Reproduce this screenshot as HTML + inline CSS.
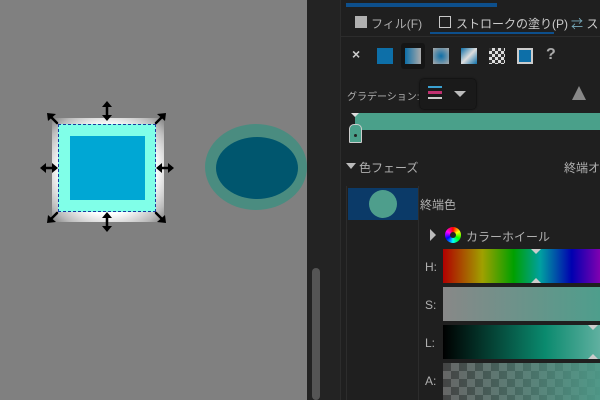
<!DOCTYPE html>
<html><head><meta charset="utf-8"><style>
body{margin:0;width:600px;height:400px;overflow:hidden;background:#1f1f1f;font-family:"Liberation Sans","Noto Sans CJK JP",sans-serif;position:relative}
.a{position:absolute}
.t{position:absolute;color:#b0b0b0;font-size:12px;white-space:nowrap}
</style></head><body>
<div class="a" style="left:0;top:0;width:307px;height:400px;background:#808080"></div>
<div class="a" style="left:307px;top:0;width:33px;height:400px;background:#232323"></div>
<div class="a" style="left:312px;top:268px;width:8px;height:132px;background:#555;border-radius:4px"></div>
<div class="a" style="left:340px;top:0;width:1px;height:400px;background:#2c2c2c"></div>
<div class="a" style="left:346px;top:3px;width:151px;height:4px;background:#0d4f8c"></div>
<div class="a" style="left:341px;top:36px;width:259px;height:1px;background:#2c2c2c"></div>
<!-- tabs -->
<div class="a" style="left:355px;top:16px;width:12px;height:12px;background:#b0b0b0"></div>
<div class="t" style="left:371px;top:15px">フィル(F)</div>
<div class="a" style="left:439px;top:16px;width:10px;height:10px;border:1px solid #c8c8c8"></div>
<div class="t" style="left:456px;top:15px;color:#ccc">ストロークの塗り(P)</div>
<div class="a" style="left:430px;top:32px;width:124px;height:2px;background:#0d4f8c"></div>
<div class="t" style="left:571px;top:15px;color:#7ab">⇄ <span style="color:#ccc">ス</span></div>
<!-- paint type icons -->
<div class="t" style="left:352px;top:46px;font-size:14px;color:#ccc;font-weight:bold">×</div>
<div class="a" style="left:377px;top:48px;width:16px;height:16px;background:#0d6fa8"></div>
<div class="a" style="left:401px;top:43px;width:24px;height:26px;background:#151515;border-radius:3px"></div>
<div class="a" style="left:405px;top:48px;width:16px;height:16px;background:linear-gradient(90deg,#0d6fa8,#aaa)"></div>
<div class="a" style="left:433px;top:48px;width:16px;height:16px;background:radial-gradient(#0d6fa8,#aaa)"></div>
<div class="a" style="left:461px;top:48px;width:16px;height:16px;background:linear-gradient(135deg,#0d6fa8,#ddd,#0d6fa8)"></div>
<div class="a" style="left:489px;top:48px;width:16px;height:16px;background:repeating-conic-gradient(#ddd 0 25%,#333 0 50%) 0 0/6px 6px"></div>
<div class="a" style="left:517px;top:48px;width:12px;height:12px;border:2px solid #ccc;background:#0d6fa8"></div>
<div class="t" style="left:546px;top:46px;font-size:16px;font-weight:bold;color:#aaa">?</div>
<!-- gradient row -->
<div class="t" style="left:347px;top:88px;font-size:10px">グラデーション:</div>
<div class="a" style="left:420px;top:79px;width:56px;height:30px;background:#1a1a1a;border-radius:4px;box-shadow:0 0 2px #000"></div>
<div class="a" style="left:428px;top:86px;width:14px;height:2px;background:#3aa0d0"></div>
<div class="a" style="left:428px;top:91px;width:14px;height:3px;background:#c03070"></div>
<div class="a" style="left:428px;top:97px;width:14px;height:2px;background:#ccc"></div>
<div class="a" style="left:454px;top:91px;border-left:6px solid transparent;border-right:6px solid transparent;border-top:6px solid #bbb"></div>
<div class="a" style="left:572px;top:86px;border-left:7px solid transparent;border-right:7px solid transparent;border-bottom:14px solid #888"></div>
<!-- gradient bar -->
<div class="a" style="left:355px;top:113px;width:245px;height:17px;background:#4aa08a"></div>
<div class="a" style="left:351px;top:113px;border-left:4px solid transparent;border-right:4px solid transparent;border-top:4px solid #ddd"></div>
<div class="a" style="left:349px;top:124px;width:13px;height:19px;background:#4aa08a;border:1px solid #ccc;border-radius:5px 5px 1px 1px;box-sizing:border-box"></div>
<div class="a" style="left:354px;top:134px;width:3px;height:3px;background:#222;border-radius:50%"></div>
<!-- phases -->
<div class="a" style="left:346px;top:163px;border-left:5px solid transparent;border-right:5px solid transparent;border-top:6px solid #bbb"></div>
<div class="t" style="left:359px;top:159px">色フェーズ</div>
<div class="t" style="left:564px;top:159px">終端オ</div>
<div class="a" style="left:346px;top:186px;width:1px;height:214px;background:#2c2c2c"></div>
<div class="a" style="left:418px;top:186px;width:1px;height:214px;background:#2c2c2c"></div>
<div class="a" style="left:348px;top:188px;width:70px;height:32px;background:#0b3a68"></div>
<div class="a" style="left:369px;top:190px;width:28px;height:28px;border-radius:50%;background:#4e9e8c"></div>
<div class="t" style="left:420px;top:196px">終端色</div>
<div class="a" style="left:430px;top:229px;border-top:6px solid transparent;border-bottom:6px solid transparent;border-left:6px solid #bbb"></div>
<div class="a" style="left:445px;top:227px;width:16px;height:16px;border-radius:50%;background:conic-gradient(red,yellow,lime,cyan,blue,magenta,red)"></div>
<div class="a" style="left:450px;top:232px;width:6px;height:6px;border-radius:50%;background:#222"></div>
<div class="t" style="left:466px;top:228px">カラーホイール</div>
<!-- sliders -->
<div class="t" style="left:425px;top:260px">H:</div>
<div class="a" style="left:443px;top:249px;width:157px;height:34px;background:linear-gradient(90deg,#b00000,#a0a000 25%,#00a000 45%,#00a0a0 62%,#0000b0 82%,#8000b0)"></div>
<div class="t" style="left:425px;top:298px">S:</div>
<div class="a" style="left:443px;top:287px;width:157px;height:34px;background:linear-gradient(90deg,#888,#4e9e8c)"></div>
<div class="t" style="left:425px;top:336px">L:</div>
<div class="a" style="left:443px;top:325px;width:157px;height:34px;background:linear-gradient(90deg,#000,#0a8a6e 65%,#60b0a0)"></div>
<div class="t" style="left:425px;top:374px">A:</div>
<div class="a" style="left:443px;top:363px;width:157px;height:37px;background:linear-gradient(90deg,rgba(78,158,140,0),rgba(78,158,140,.9)),repeating-conic-gradient(#666 0 25%,#444 0 50%) 0 0/16px 16px"></div>
<div class="a" style="left:531px;top:249px;border-left:5px solid transparent;border-right:5px solid transparent;border-top:5px solid #ccc"></div>
<div class="a" style="left:531px;top:278px;border-left:5px solid transparent;border-right:5px solid transparent;border-bottom:5px solid #ccc"></div>
<div class="a" style="left:588px;top:325px;border-left:5px solid transparent;border-right:5px solid transparent;border-top:5px solid #ccc"></div>
<div class="a" style="left:588px;top:354px;border-left:5px solid transparent;border-right:5px solid transparent;border-bottom:5px solid #ccc"></div>
<!-- canvas objects -->
<div class="a" style="left:205px;top:124px;width:102px;height:86px;border-radius:50%;background:#4a8c80"></div>
<div class="a" style="left:216px;top:137px;width:82px;height:62px;border-radius:50%;background:#00566e"></div>
<div class="a" style="left:52px;top:118px;width:112px;height:104px;background:radial-gradient(#fff 60%,#bbb 85%,#808080)"></div>
<div class="a" style="left:58px;top:124px;width:98px;height:88px;background:#80ffe8;border:1px dashed #1a3aa0;box-sizing:border-box"></div>
<div class="a" style="left:70px;top:136px;width:75px;height:64px;background:#00a7d4"></div>
<svg class="a" style="left:0;top:0" width="307" height="400" fill="#000" stroke="#000" stroke-width="2.5">
<g stroke-linecap="round">
<line x1="107" y1="104" x2="107" y2="118"/><polygon points="102,107 107,101 112,107" stroke="none"/><polygon points="102,115 107,121 112,115" stroke="none"/>
<line x1="107" y1="215" x2="107" y2="229"/><polygon points="102,218 107,212 112,218" stroke="none"/><polygon points="102,226 107,232 112,226" stroke="none"/>
<line x1="43" y1="168" x2="55" y2="168"/><polygon points="46,163 40,168 46,173" stroke="none"/><polygon points="52,163 58,168 52,173" stroke="none"/>
<line x1="159" y1="168" x2="171" y2="168"/><polygon points="162,163 156,168 162,173" stroke="none"/><polygon points="168,163 174,168 168,173" stroke="none"/>
<line x1="50" y1="116" x2="57" y2="123"/><polygon points="47,113 56,114 48,121" stroke="none"/>
<line x1="163" y1="116" x2="156" y2="123"/><polygon points="166,113 157,114 165,121" stroke="none"/>
<line x1="50" y1="220" x2="57" y2="213"/><polygon points="47,223 56,222 48,215" stroke="none"/>
<line x1="163" y1="220" x2="156" y2="213"/><polygon points="166,223 157,222 165,215" stroke="none"/>
</g></svg>
</body></html>
